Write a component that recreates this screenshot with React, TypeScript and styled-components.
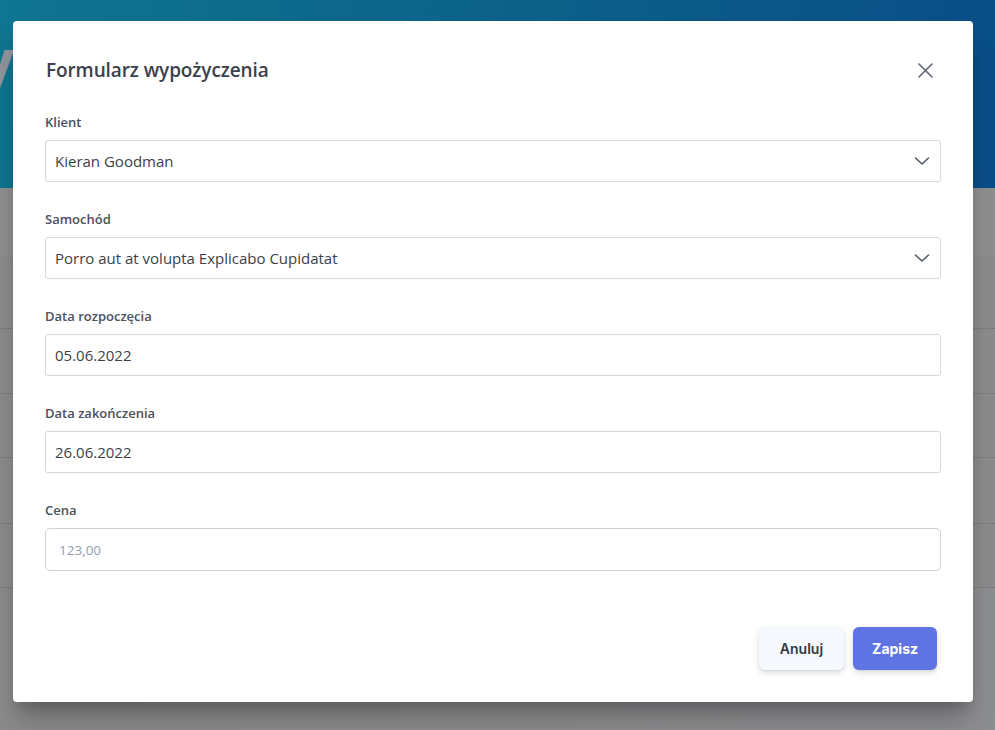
import React from "react";
import styled, { createGlobalStyle } from "styled-components";

const Global = createGlobalStyle`
  html, body { margin: 0; padding: 0; }
  body { font-family: "Open Sans", "Noto Sans", sans-serif; background: #8a8b8d; overflow: hidden; }
  * { box-sizing: border-box; }
`;

const Page = styled.div`
  position: relative;
  width: 995px;
  height: 730px;
  overflow: hidden;
  background: linear-gradient(90deg, #8a8a8a 0%, #8c8d90 100%);
`;

const Hero = styled.header`
  height: 188px;
  background: linear-gradient(100deg, #0f7590 0%, #0b5f88 55%, #0a4d88 100%);
  display: flex;
  align-items: flex-start;
  padding-top: 30px;
  overflow: hidden;
`;

const HeroTitle = styled.h1`
  margin: 0 0 0 -20px;
  font-family: "Open Sans", sans-serif;
  font-size: 60px;
  font-weight: 700;
  color: #8f959b;
  line-height: 1;
`;

const Table = styled.div`
  display: flex;
  flex-direction: column;
`;

const TableHead = styled.div`
  height: 70px;
  background: #8e8e8e;
  border-bottom: 1px solid #868686;
`;

const TableRow = styled.div<{ $h: number }>`
  height: ${(p) => p.$h}px;
  background: #8b8b8b;
  border-bottom: 1px solid #7c7c7c;
`;

const Overlay = styled.div`
  position: absolute;
  inset: 0;
  display: flex;
  align-items: flex-start;
  justify-content: flex-start;
  padding: 21px 0 0 13px;
`;

const Modal = styled.div`
  width: 960px;
  height: 681px;
  background: #ffffff;
  border-radius: 4px;
  padding: 32px 32px 32px 32px;
  box-shadow: 0 20px 25px -5px rgba(0, 0, 0, 0.25), 0 10px 10px -5px rgba(0, 0, 0, 0.12);
  display: flex;
  flex-direction: column;
`;

const ModalHeader = styled.div`
  height: 34px;
  display: flex;
  align-items: center;
  justify-content: space-between;
  margin-bottom: 25px;
`;

const Title = styled.h2`
  margin: 0 0 0 1px;
  font-size: 19px;
  font-weight: 600;
  color: #3b404b;
  letter-spacing: -0.1px;
`;

const CloseButton = styled.button`
  border: 0;
  background: transparent;
  padding: 0;
  margin-right: 8px;
  width: 16px;
  height: 16px;
  display: flex;
  align-items: center;
  justify-content: center;
  color: #5d6672;
  cursor: pointer;
`;

const Field = styled.div`
  display: flex;
  flex-direction: column;
  gap: 8px;
  margin-bottom: 27px;
`;

const Label = styled.label`
  font-size: 13px;
  line-height: 20px;
  font-weight: 600;
  color: #4a505c;
`;

const InputBox = styled.div<{ $tall?: boolean }>`
  position: relative;
  height: ${(p) => (p.$tall ? "43px" : "42px")};
  border: 1px solid ${(p) => (p.$tall ? "#cdd3dc" : "#d4d7dc")};
  border-radius: ${(p) => (p.$tall ? "5px" : "3px")};
  display: flex;
  align-items: center;
  padding: 0 10px 0 9px;
  background: #fff;
`;

const Value = styled.span<{ $placeholder?: boolean }>`
  flex: 1;
  font-size: ${(p) => (p.$placeholder ? "13.5px" : "15px")};
  color: ${(p) => (p.$placeholder ? "#94a0b2" : "#3a3f49")};
  ${(p) => (p.$placeholder ? "padding-left: 4px;" : "")}
`;

const Chevron = styled.svg`
  width: 16px;
  height: 16px;
  color: #4f5a68;
`;

const Footer = styled.div`
  margin-top: auto;
  display: flex;
  justify-content: flex-end;
  gap: 9px;
  padding-right: 4px;
`;

const Button = styled.button<{ $primary?: boolean }>`
  height: 43px;
  border: 0;
  border-radius: 6px;
  padding: 0 ${(p) => (p.$primary ? "19px" : "21px")};
  font-family: Inter, "Open Sans", sans-serif;
  font-size: 14px;
  font-weight: ${(p) => (p.$primary ? 700 : 600)};
  color: ${(p) => (p.$primary ? "#ffffff" : "#343a44")};
  background: ${(p) => (p.$primary ? "#5f74e3" : "#f5f8fc")};
  box-shadow: 0 3px 6px rgba(30, 40, 60, 0.14), 0 1px 2px rgba(30, 40, 60, 0.08);
  cursor: pointer;
`;

const ChevronIcon = () => (
  <Chevron viewBox="0 0 16 16" fill="none">
    <path d="M1.5 5 L8 11 L14.5 5" stroke="currentColor" strokeWidth="1.6" strokeLinecap="round" strokeLinejoin="round" />
  </Chevron>
);

type FieldDef = { label: string; value: string; select?: boolean; placeholder?: boolean };

const fields: FieldDef[] = [
  { label: "Klient", value: "Kieran Goodman", select: true },
  { label: "Samochód", value: "Porro aut at volupta Explicabo Cupidatat", select: true },
  { label: "Data rozpoczęcia", value: "05.06.2022" },
  { label: "Data zakończenia", value: "26.06.2022" },
  { label: "Cena", value: "123,00", placeholder: true },
];

const rowHeights = [71, 65, 64, 66, 64];

export default function App() {
  return (
    <>
      <Global />
      <Page>
        <Hero>
          <HeroTitle>y</HeroTitle>
        </Hero>
        <Table>
          <TableHead />
          {rowHeights.map((h, i) => (
            <TableRow key={i} $h={h} />
          ))}
        </Table>
        <Overlay>
          <Modal>
            <ModalHeader>
              <Title>Formularz wypożyczenia</Title>
              <CloseButton aria-label="Zamknij">
                <svg width="15" height="15" viewBox="0 0 15 15" fill="none">
                  <path d="M1 1 L14 14 M14 1 L1 14" stroke="currentColor" strokeWidth="1.6" strokeLinecap="round" />
                </svg>
              </CloseButton>
            </ModalHeader>
            {fields.map((f) => (
              <Field key={f.label}>
                <Label>{f.label}</Label>
                <InputBox $tall={f.placeholder}>
                  <Value $placeholder={f.placeholder}>{f.value}</Value>
                  {f.select && <ChevronIcon />}
                </InputBox>
              </Field>
            ))}
            <Footer>
              <Button>Anuluj</Button>
              <Button $primary>Zapisz</Button>
            </Footer>
          </Modal>
        </Overlay>
      </Page>
    </>
  );
}
